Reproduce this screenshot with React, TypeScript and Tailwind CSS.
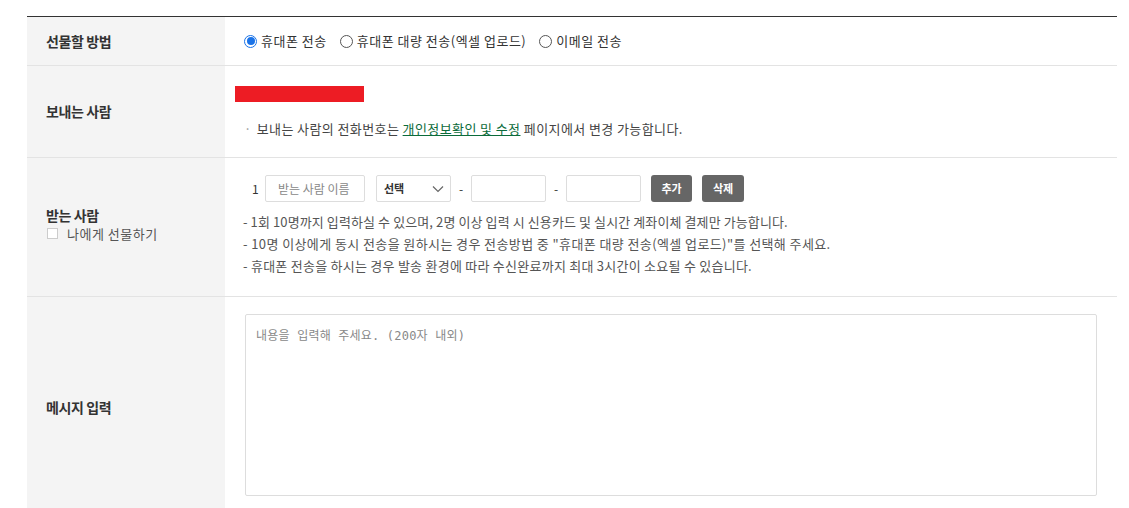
import React from "react";

const font = { fontFamily: '"Noto Sans CJK KR", "Noto Sans", sans-serif' };

function Label({ children }: { children: React.ReactNode }) {
  return (
    <div className="w-[198px] shrink-0 bg-[#f4f4f4] pl-[19px] flex flex-col justify-center">
      {children}
    </div>
  );
}

function Radio({ checked, label }: { checked?: boolean; label: string }) {
  return (
    <label className="flex items-center gap-[4px] mr-[13px]">
      <span
        className={`w-[13px] h-[13px] rounded-full border flex items-center justify-center ${
          checked ? "border-[#1a73e8]" : "border-[#555]"
        } bg-white`}
      >
        {checked && <span className="w-[8px] h-[8px] rounded-full bg-[#1a73e8]" />}
      </span>
      <span>{label}</span>
    </label>
  );
}

export default function App() {
  return (
    <div className="bg-white w-full min-h-[508px] pt-[16px] pl-[27px] pr-[12px]" style={font}>
      <div className="border-t border-[#333] text-[#333] text-[13px]">
        {/* 선물할 방법 */}
        <div className="flex h-[49px] border-b border-[#e3e3e3]">
          <Label>
            <span className="text-[14px] font-bold tracking-[-0.4px]">선물할 방법</span>
          </Label>
          <div className="flex items-center pl-[19px] tracking-[0.5px]">
            <Radio checked label="휴대폰 전송" />
            <Radio label="휴대폰 대량 전송(엑셀 업로드)" />
            <Radio label="이메일 전송" />
          </div>
        </div>

        {/* 보내는 사람 */}
        <div className="flex h-[92px] border-b border-[#e3e3e3]">
          <Label>
            <span className="text-[14px] font-bold tracking-[-0.4px]">보내는 사람</span>
          </Label>
          <div className="flex flex-col pl-[10px] pt-[20px]">
            <div className="w-[129px] h-[16px] bg-[#ed1c24]" />
            <p className="mt-[17px] pl-[9px] text-[13px] text-[#444] tracking-[0.4px]">
              <span className="text-[#999] mr-[5px]">·</span>
              보내는 사람의 전화번호는{" "}
              <a className="text-[#0b6b3a] underline">개인정보확인 및 수정</a> 페이지에서 변경 가능합니다.
            </p>
          </div>
        </div>

        {/* 받는 사람 */}
        <div className="flex h-[139px] border-b border-[#e3e3e3]">
          <Label>
            <div className="mb-[5px] flex flex-col">
              <span className="text-[14px] font-bold leading-[18px] tracking-[-0.4px]">받는 사람</span>
              <label className="flex items-center gap-[9px] text-[13px] text-[#555] leading-[19px] tracking-[0.5px]">
                <span className="w-[11px] h-[11px] border border-[#ccc] bg-white ml-[1px]" />
                나에게 선물하기
              </label>
            </div>
          </Label>
          <div className="flex flex-col pl-[20px] pt-[17px]">
            <div className="flex items-center h-[27px] text-[12px]">
              <span className="w-[20px] pl-[7px] text-[#333]">1</span>
              <div className="w-[100px] h-[27px] border border-[#ddd] rounded-[2px] flex items-center pl-[12px] text-[#888]">
                받는 사람 이름
              </div>
              <div className="ml-[11px] w-[75px] h-[27px] border border-[#ddd] rounded-[2px] flex items-center justify-between pl-[7px] pr-[6px]">
                <span className="font-bold text-[11px] text-[#333]">선택</span>
                <svg width="12" height="8" viewBox="0 0 12 8" fill="none">
                  <path d="M1 1.5 6 6.5 11 1.5" stroke="#666" strokeWidth="1.2" />
                </svg>
              </div>
              <span className="w-[20px] text-center">-</span>
              <div className="w-[75px] h-[27px] border border-[#ddd] rounded-[2px]" />
              <span className="w-[20px] text-center">-</span>
              <div className="w-[75px] h-[27px] border border-[#ddd] rounded-[2px]" />
              <button className="ml-[10px] w-[41px] h-[27px] rounded-[3px] bg-[#666] text-white text-[11px] font-bold">
                추가
              </button>
              <button className="ml-[10px] w-[42px] h-[27px] rounded-[3px] bg-[#666] text-white text-[11px] font-bold">
                삭제
              </button>
            </div>
            <div className="mt-[9px] text-[13px] text-[#555] leading-[22px] ml-[-2px] tracking-[0.1px]">
              <p>- 1회 10명까지 입력하실 수 있으며, 2명 이상 입력 시 신용카드 및 실시간 계좌이체 결제만 가능합니다.</p>
              <p className="tracking-[0.4px]">- 10명 이상에게 동시 전송을 원하시는 경우 전송방법 중 "휴대폰 대량 전송(엑셀 업로드)"를 선택해 주세요.</p>
              <p className="tracking-[0.25px]">- 휴대폰 전송을 하시는 경우 발송 환경에 따라 수신완료까지 최대 3시간이 소요될 수 있습니다.</p>
            </div>
          </div>
        </div>

        {/* 메시지 입력 */}
        <div className="flex h-[220px]">
          <Label>
            <span className="text-[14px] font-bold tracking-[-0.4px]">메시지 입력</span>
          </Label>
          <div className="flex-1 pl-[20px] pr-[20px] pt-[17px]">
            <div
              className="h-[182px] border border-[#ddd] rounded-[2px] pl-[10px] pt-[12px] text-[12px] text-[#888] tracking-[0.2px]"
              style={{ fontFamily: '"DejaVu Sans Mono", "Noto Sans CJK KR", monospace' }}
            >
              내용을 입력해 주세요. (200자 내외)
            </div>
          </div>
        </div>
      </div>
    </div>
  );
}
